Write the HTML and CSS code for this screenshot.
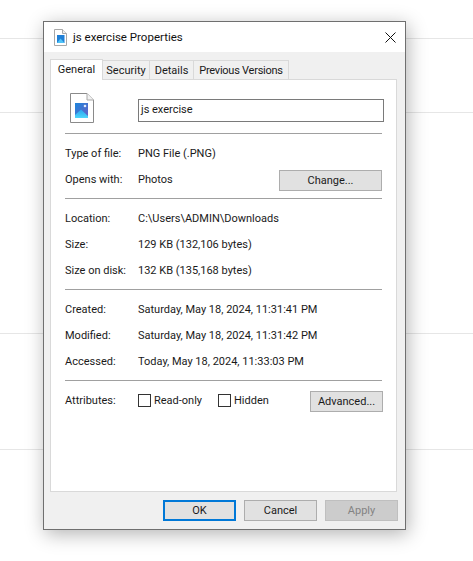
FILE: index.html
```html
<!DOCTYPE html>
<html lang="en">
<head>
  <meta charset="UTF-8">
  <title>js exercise Properties</title>
  <link rel="stylesheet" href="styles.css">
</head>
<body>
  <div class="backdrop">
    <div class="backline first"></div>
    <div class="backline second"></div>
    <div class="backline third"></div>
    <div class="backline fourth"></div>
  </div>

  <div class="window">
    <div class="titlebar">
      <svg class="small-icon" width="13" height="17" viewBox="0 0 13 17">
        <path d="M.5.5H8.500L12.500 4.500V16.500H.5Z" fill="#fff" stroke="#a8a8a8"/>
        <path d="M8.500.5V4.500H12.500" fill="#eee" stroke="#a8a8a8"/>
        <rect x="3" y="6" width="7.500" height="8" fill="#1f7fd6"/>
        <path d="M3 14L6.500 9.500L10.500 14Z" fill="#4fc3f7"/>
      </svg>
      <span class="title">js exercise Properties</span>
      <svg class="close" width="11" height="11" viewBox="0 0 11 11">
        <path d="M.5.5L10.500 10.500M10.500.5L.5 10.500" stroke="#111" stroke-width="1" fill="none"/>
      </svg>
    </div>

    <div class="body">
      <div class="tabs">
        <div class="tab active">General</div>
        <div class="tab security">Security</div>
        <div class="tab details">Details</div>
        <div class="tab versions">Previous Versions</div>
      </div>

      <div class="panel">
        <div class="file-head">
          <svg class="big-icon" width="24" height="30" viewBox="0 0 24 30">
            <path d="M.5.5H17L23.500 7V29.500H.5Z" fill="#fff" stroke="#8a8a8a"/>
            <path d="M17 .5V7H23.500" fill="#f2f2f2" stroke="#a8a8a8"/>
            <defs>
              <linearGradient id="sky" x1="0" y1="0" x2="1" y2="1">
                <stop offset="0" stop-color="#1c86dc"/>
                <stop offset="1" stop-color="#6a5fc4"/>
              </linearGradient>
              <linearGradient id="hill" x1="0" y1="0" x2="0" y2="1">
                <stop offset="0" stop-color="#2aa3ee"/>
                <stop offset="1" stop-color="#4fd6fb"/>
              </linearGradient>
            </defs>
            <rect x="5" y="10" width="13" height="15" fill="url(#sky)"/>
            <path d="M5 25V22L11 16.500L18 23V25Z" fill="url(#hill)"/>
            <circle cx="15" cy="13" r="1.300" fill="#dfe9fb"/>
          </svg>
          <div class="name-box">js exercise</div>
        </div>
        <div class="rule"></div>

        <div class="section">
          <div class="row"><span class="label">Type of file:</span><span>PNG File (.PNG)</span></div>
          <div class="row">
            <span class="label">Opens with:</span><span class="grow">Photos</span>
            <button class="btn change">Change...</button>
          </div>
        </div>
        <div class="rule"></div>

        <div class="section">
          <div class="row"><span class="label">Location:</span><span>C:\Users\ADMIN\Downloads</span></div>
          <div class="row"><span class="label">Size:</span><span>129 KB (132,106 bytes)</span></div>
          <div class="row"><span class="label">Size on disk:</span><span>132 KB (135,168 bytes)</span></div>
        </div>
        <div class="rule"></div>

        <div class="section">
          <div class="row"><span class="label">Created:</span><span>Saturday, May 18, 2024, 11:31:41 PM</span></div>
          <div class="row"><span class="label">Modified:</span><span>Saturday, May 18, 2024, 11:31:42 PM</span></div>
          <div class="row"><span class="label">Accessed:</span><span>Today, May 18, 2024, 11:33:03 PM</span></div>
        </div>
        <div class="rule"></div>

        <div class="section">
          <div class="row">
            <span class="label">Attributes:</span>
            <span class="check readonly"><span class="box"></span>Read-only</span>
            <span class="check hidden"><span class="box"></span>Hidden</span>
            <button class="btn advanced">Advanced...</button>
          </div>
        </div>
      </div>

      <div class="footer">
        <button class="btn wide ok">OK</button>
        <button class="btn wide">Cancel</button>
        <button class="btn wide apply">Apply</button>
      </div>
    </div>
  </div>
</body>
</html>
```

FILE: styles.css
```css
html, body {
  margin: 0;
  padding: 0;
}

body {
  width: 473px;
  height: 561px;
  overflow: hidden;
  background: #ffffff;
  font-family: Roboto, "Liberation Sans", sans-serif;
  font-size: 11px;
  color: #1a1a1a;
}

.backline {
  height: 1px;
  background: #e6e6e6;
}

.first { margin-top: 38px; }
.second { margin-top: 73px; }
.third { margin-top: 220px; }
.fourth { margin-top: 115px; }

/* the dialog floats over the page behind it */
.window {
  position: absolute;
  left: 43px;
  top: 21px;
  width: 361px;
  height: 507px;
  border: 1px solid #6f6f6f;
  background: #f0f0f0;
  box-shadow: 2px 4px 18px rgba(0, 0, 0, 0.3);
}

.titlebar {
  height: 30px;
  background: #ffffff;
  display: flex;
  align-items: center;
  padding: 0 9px 0 10px;
}

.title {
  flex: 1;
  margin-left: 6px;
  font-size: 11.5px;
  color: #111;
}

.body {
  padding: 7px 8px 0 6px;
}

.tabs {
  display: flex;
  height: 20px;
  align-items: flex-end;
}

.tab {
  box-sizing: border-box;
  height: 19px;
  border: 1px solid #d9d9d9;
  border-bottom: none;
  border-left: none;
  background: #f0f0f0;
  text-align: center;
  line-height: 19px;
  white-space: nowrap;
}

.tab.active {
  width: 53px;
  height: 21px;
  margin-bottom: -1px;
  background: #ffffff;
  border-left: 1px solid #d9d9d9;
  position: relative;
  z-index: 1;
  line-height: 19px;
}

.security { width: 47px; }
.details { width: 44px; }
.versions {
  width: 95px;
  letter-spacing: -0.25px;
}

.panel {
  box-sizing: border-box;
  width: 347px;
  height: 413px;
  background: #ffffff;
  border: 1px solid #d9d9d9;
  padding: 13px 14px 0 14px;
}

.file-head {
  display: flex;
  align-items: flex-start;
  height: 40px;
}

.big-icon {
  flex: none;
  margin-left: 5px;
}

.name-box {
  box-sizing: border-box;
  flex: none;
  width: 246px;
  height: 23px;
  margin: 6px 0 0 44px;
  border: 1px solid #7a7a7a;
  padding-left: 2px;
  line-height: 20px;
}

.rule {
  width: 317px;
  height: 1px;
  background: #a0a0a0;
}

.section {
  padding: 6px 0;
}

.row {
  display: flex;
  align-items: center;
  height: 26px;
}

.label {
  width: 73px;
  flex: none;
}

.grow {
  flex: 1;
}

.btn {
  box-sizing: border-box;
  flex: none;
  height: 21px;
  padding: 0;
  border: 1px solid #adadad;
  background: #e1e1e1;
  font-family: inherit;
  font-size: 11px;
  color: #1a1a1a;
}

.change {
  width: 103px;
  margin-top: 3px;
}

.check {
  display: flex;
  flex: none;
  align-items: center;
}

.readonly { width: 80px; }
.hidden { width: 92px; }

.box {
  box-sizing: border-box;
  width: 13px;
  height: 13px;
  margin-right: 3px;
  border: 1px solid #333;
  background: #ffffff;
}

.advanced {
  width: 73px;
  margin-top: 3px;
}

.footer {
  display: flex;
  justify-content: flex-end;
  gap: 8px;
  margin: 8px -1px 0 0;
}

.wide {
  width: 73px;
}

.ok {
  border: 2px solid #0078d7;
}

.apply {
  background: #cccccc;
  border-color: #bfbfbf;
  color: #838383;
}
```
